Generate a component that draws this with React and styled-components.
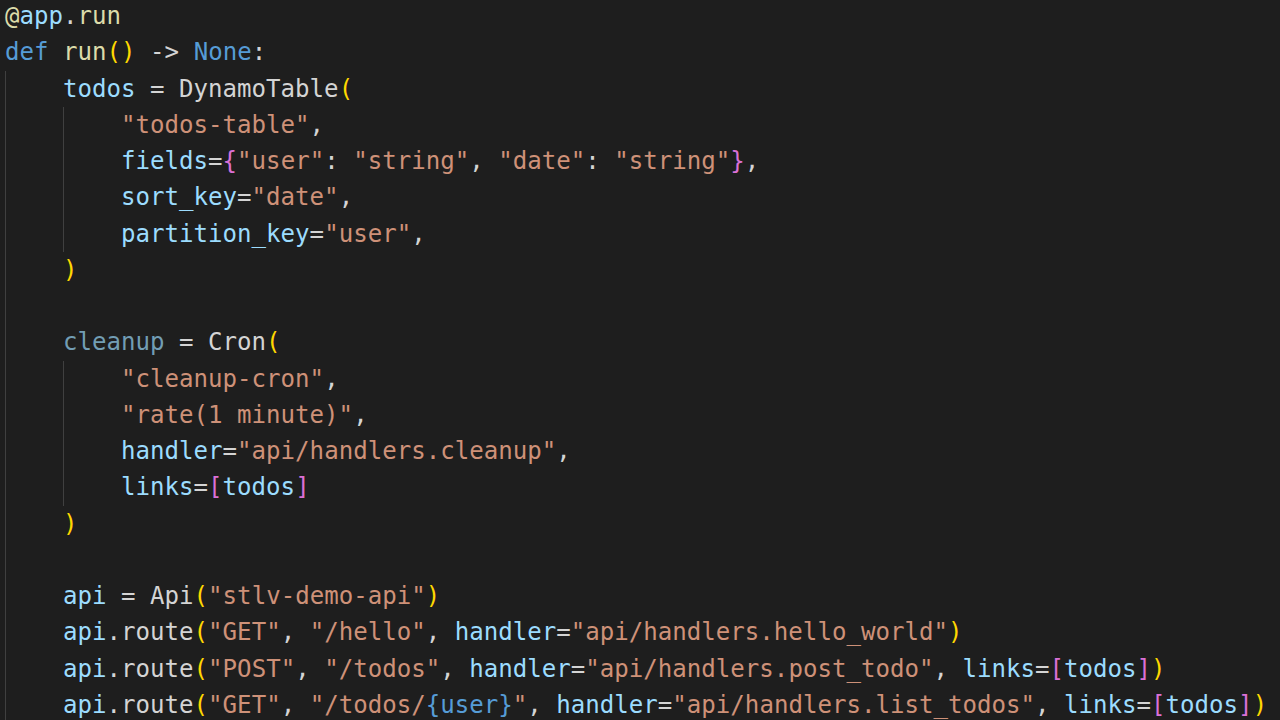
import React from 'react'
import styled, { createGlobalStyle } from 'styled-components'

const GlobalStyle = createGlobalStyle`
  html, body {
    margin: 0;
    padding: 0;
    background: #1e1e1e;
  }
`

const colors = {
  kw: '#569cd6',
  fn: '#dcdcaa',
  var: '#9cdcfe',
  dim: '#729db4',
  str: '#ce9178',
  plain: '#d4d4d4',
  b1: '#ffd700',
  b2: '#da70d6',
}

const Editor = styled.div`
  width: 1280px;
  height: 720px;
  overflow: hidden;
  background: #1e1e1e;
  padding: 0 0 0 5px;
  box-sizing: border-box;
  font-family: "DejaVu Sans Mono", "Liberation Mono", monospace;
  font-size: 24.1px;
  line-height: 36.26px;
`

const Lines = styled.div`
  margin-top: -2px;
`

const Line = styled.div`
  display: flex;
  height: 36.26px;
`

const Indent = styled.span`
  flex: none;
  width: 4ch;
  box-sizing: border-box;
  border-left: 1px solid #404040;
`

const Code = styled.span`
  white-space: pre;
`

const Tok = styled.span`
  color: ${p => colors[p.$k] || colors.plain};
`

const P = (t) => ['plain', t]
const S = (t) => ['str', t]
const V = (t) => ['var', t]
const B1 = (t) => ['b1', t]
const B2 = (t) => ['b2', t]

// [indent level, tokens]
const code = [
  [0, [['fn', '@'], V('app'), P('.'), ['fn', 'run']]],
  [0, [['kw', 'def'], P(' '), ['fn', 'run'], B1('()'), P(' -> '), ['kw', 'None'], P(':')]],
  [1, [V('todos'), P(' = DynamoTable'), B1('(')]],
  [2, [S('"todos-table"'), P(',')]],
  [2, [V('fields'), P('='), B2('{'), S('"user"'), P(': '), S('"string"'), P(', '), S('"date"'), P(': '), S('"string"'), B2('}'), P(',')]],
  [2, [V('sort_key'), P('='), S('"date"'), P(',')]],
  [2, [V('partition_key'), P('='), S('"user"'), P(',')]],
  [1, [B1(')')]],
  [1, []],
  [1, [['dim', 'cleanup'], P(' = Cron'), B1('(')]],
  [2, [S('"cleanup-cron"'), P(',')]],
  [2, [S('"rate(1 minute)"'), P(',')]],
  [2, [V('handler'), P('='), S('"api/handlers.cleanup"'), P(',')]],
  [2, [V('links'), P('='), B2('['), V('todos'), B2(']')]],
  [1, [B1(')')]],
  [1, []],
  [1, [V('api'), P(' = Api'), B1('('), S('"stlv-demo-api"'), B1(')')]],
  [1, [V('api'), P('.route'), B1('('), S('"GET"'), P(', '), S('"/hello"'), P(', '), V('handler'), P('='), S('"api/handlers.hello_world"'), B1(')')]],
  [1, [V('api'), P('.route'), B1('('), S('"POST"'), P(', '), S('"/todos"'), P(', '), V('handler'), P('='), S('"api/handlers.post_todo"'), P(', '), V('links'), P('='), B2('['), V('todos'), B2(']'), B1(')')]],
  [1, [V('api'), P('.route'), B1('('), S('"GET"'), P(', '), S('"/todos/'), ['kw', '{user}'], S('"'), P(', '), V('handler'), P('='), S('"api/handlers.list_todos"'), P(', '), V('links'), P('='), B2('['), V('todos'), B2(']'), B1(')')]],
]

const App = () => {
  return (
    <>
      <GlobalStyle />
      <Editor>
        <Lines>
          {code.map(([level, toks], i) => (
            <Line key={i}>
              {Array.from({ length: level }).map((_, j) => (
                <Indent key={j} />
              ))}
              <Code>
                {toks.map(([k, t], j) => (
                  <Tok key={j} $k={k}>{t}</Tok>
                ))}
              </Code>
            </Line>
          ))}
        </Lines>
      </Editor>
    </>
  )
}

export default App
